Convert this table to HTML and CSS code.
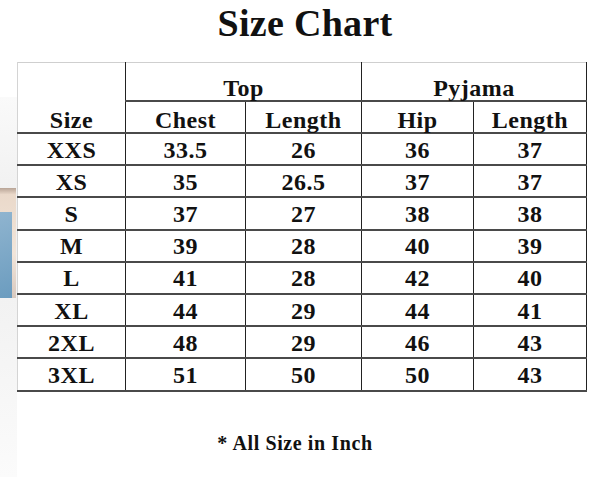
FILE: index.html
```html
<!DOCTYPE html>
<html>
<head>
<meta charset="utf-8">
<link rel="stylesheet" href="styles.css">
</head>
<body>
<div class="page">
  <h1 class="title">Size Chart</h1>
  <table class="chart">
    <colgroup>
      <col class="c-size"><col class="c-chest"><col class="c-tlen"><col class="c-hip"><col class="c-plen">
    </colgroup>
    <thead>
      <tr class="r-group">
        <th rowspan="2" class="size-head">Size</th>
        <th colspan="2">Top</th>
        <th colspan="2">Pyjama</th>
      </tr>
      <tr class="r-sub">
        <th>Chest</th><th>Length</th><th>Hip</th><th>Length</th>
      </tr>
    </thead>
    <tbody>
      <tr><td>XXS</td><td>33.5</td><td>26</td><td>36</td><td>37</td></tr>
      <tr><td>XS</td><td>35</td><td>26.5</td><td>37</td><td>37</td></tr>
      <tr><td>S</td><td>37</td><td>27</td><td>38</td><td>38</td></tr>
      <tr><td>M</td><td>39</td><td>28</td><td>40</td><td>39</td></tr>
      <tr><td>L</td><td>41</td><td>28</td><td>42</td><td>40</td></tr>
      <tr><td>XL</td><td>44</td><td>29</td><td>44</td><td>41</td></tr>
      <tr><td>2XL</td><td>48</td><td>29</td><td>46</td><td>43</td></tr>
      <tr><td>3XL</td><td>51</td><td>50</td><td>50</td><td>43</td></tr>
    </tbody>
  </table>
  <p class="note">* All Size in Inch</p>
</div>
</body>
</html>
```
FILE: styles.css
```css
html, body {
  margin: 0;
  padding: 0;
}
body {
  width: 600px;
  height: 497px;
  overflow: hidden;
  font-family: "Liberation Serif", "Times New Roman", serif;
  color: #111;
  background-color: #fff;
  background-image:
    linear-gradient(160deg, #8fb4cf 0, #6b9cbf 100%),
    linear-gradient(180deg, #b8a496 0, #ead9ca 6%, #f1e5da 60%, #d8c9bf 100%),
    linear-gradient(180deg, #fafafa 0, #efefef 30%, #f3f3f3 60%, #fbfbfb 100%);
  background-repeat: no-repeat;
  background-size: 12px 86px, 16px 110px, 17px 380px;
  background-position: 0 212px, 0 188px, 0 97px;
}
.page {
  display: flex;
  flex-direction: column;
  align-items: flex-start;
}
.title {
  margin: 0;
  width: 600px;
  text-align: center;
  padding-left: 10px;
  box-sizing: border-box;
  font-size: 38px;
  line-height: 46px;
  font-weight: bold;
  letter-spacing: 0.3px;
}
.chart {
  margin: 16px 0 0 17px;
  border-collapse: collapse;
  table-layout: fixed;
  width: 569px;
  font-size: 24px;
  letter-spacing: 0.5px;
  font-weight: bold;
  border-top: 1px solid #cfcfcf;
  border-left: 1px solid #d4d4d4;
  border-right: 1px solid #222;
  border-bottom: 2px solid #222;
}
.c-size { width: 108px; }
.c-chest { width: 120px; }
.c-tlen { width: 116px; }
.c-hip { width: 112px; }
.c-plen { width: 113px; }
.chart th, .chart td {
  padding: 0;
  text-align: center;
  border-left: 1px solid #222;
  border-bottom: 2px solid #4a4a4a;
}
.chart th:first-child, .chart td:first-child {
  border-left: 1px solid #d4d4d4;
}
.r-sub th:first-child {
  border-left: 1px solid #222;
}
.chart th {
  vertical-align: bottom;
  line-height: 24px;
  padding-bottom: 0;
}
.r-group th {
  height: 37px;
}
.r-sub th {
  height: 30px;
}
.chart td {
  height: 30.2px;
  line-height: 26px;
  padding-top: 1px;
  box-sizing: border-box;
  vertical-align: middle;
}
.chart tbody tr {
  height: 32.2px;
}
.note {
  margin: 39px 0 0 0;
  width: 590px;
  text-align: center;
  font-size: 20px;
  letter-spacing: 0.6px;
  font-weight: bold;
  line-height: 24px;
}
```
